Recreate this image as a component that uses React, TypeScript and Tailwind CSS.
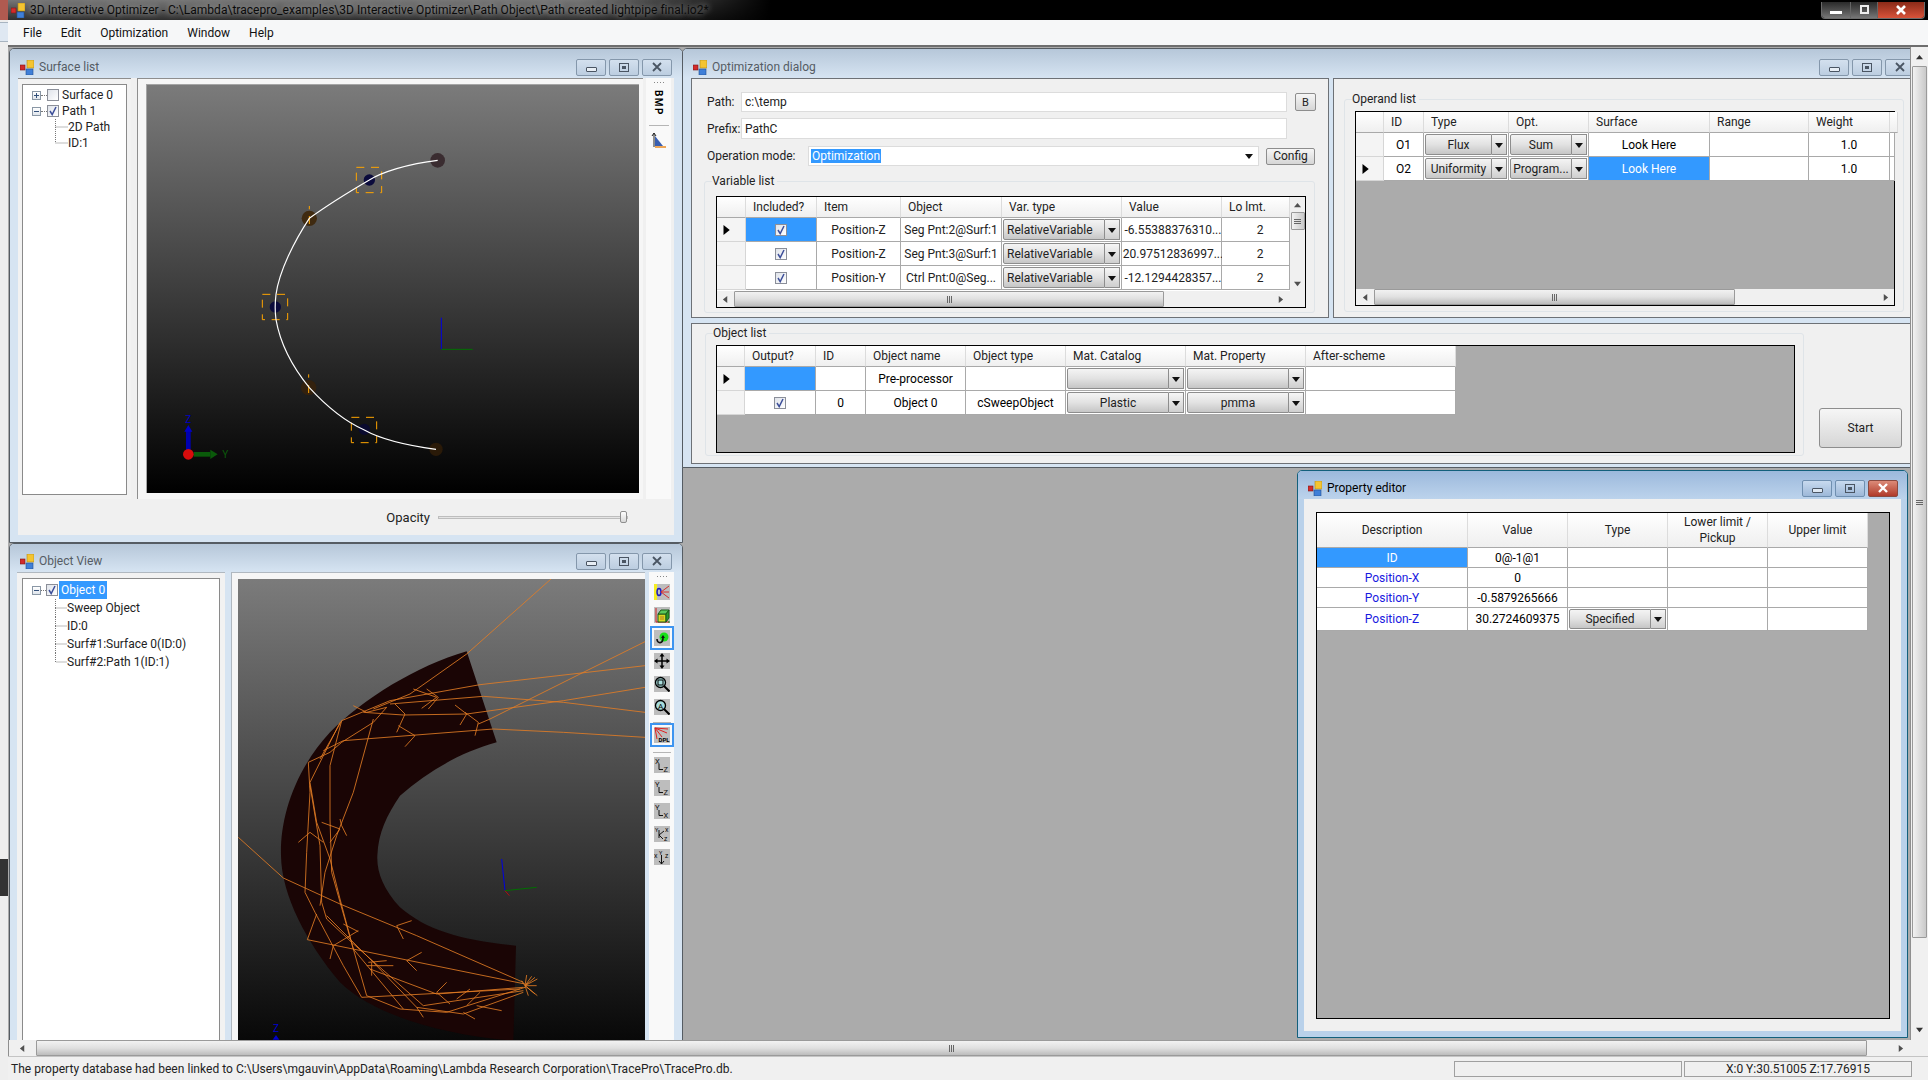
import React, { type FC, type ReactNode } from 'react';

const BLUE = 'bg-[#3399ff] text-white';

const AppIcon: FC = () => (
  <svg width="14" height="15" viewBox="0 0 14 15" className="shrink-0">
    <rect x="7" y="0" width="7" height="8" fill="#f4c430" stroke="#b08a18" strokeWidth="0.6" />
    <rect x="0" y="5" width="5" height="5" fill="#d22b2b" stroke="#7a1414" strokeWidth="0.6" />
    <rect x="6" y="9" width="7" height="6" fill="#3f7fd8" stroke="#234f90" strokeWidth="0.6" />
  </svg>
);

const Tri: FC<{ dir: 'up' | 'down' | 'left' | 'right'; size?: number; color?: string }> = ({
  dir,
  size = 7,
  color = '#505050',
}) => {
  const pts = {
    up: '0,6 8,6 4,1',
    down: '0,2 8,2 4,7',
    left: '6,0 6,8 1,4',
    right: '2,0 2,8 7,4',
  }[dir];
  return (
    <svg width={size} height={size} viewBox="0 0 8 8" className="shrink-0">
      <polygon points={pts} fill={color} />
    </svg>
  );
};

// little minimize / restore / close buttons of the child windows
const WinButtons: FC<{ active?: boolean }> = ({ active }) => {
  const face = active
    ? 'bg-gradient-to-b from-[#c8daef] to-[#9db8d8] border-[#6f8fb0]'
    : 'bg-gradient-to-b from-[#d3e0ee] to-[#bccde0] border-[#8497ab]';
  return (
    <div className="flex gap-[3px] shrink-0">
      <div className={`w-[30px] h-[17px] border rounded-[2px] flex items-end justify-center pb-[3px] ${face}`}>
        <div className="w-[11px] h-[5px] border border-[#4a5563] bg-white/60 rounded-[1px]" />
      </div>
      <div className={`w-[30px] h-[17px] border rounded-[2px] flex items-center justify-center ${face}`}>
        <div className="w-[10px] h-[9px] border border-[#4a5563] flex items-center justify-center">
          <div className="w-[4px] h-[3px] bg-[#4a5563]" />
        </div>
      </div>
      <div
        className={`w-[30px] h-[17px] border rounded-[2px] flex items-center justify-center ${
          active ? 'bg-gradient-to-b from-[#dc8a78] to-[#b0392a] border-[#8a4a40]' : face
        }`}
      >
        <svg width="12" height="10" viewBox="0 0 12 10">
          <path
            d="M2 1 L10 9 M10 1 L2 9"
            stroke={active ? '#ffffff' : '#4a5563'}
            strokeWidth={active ? 2.4 : 1.8}
            fill="none"
          />
        </svg>
      </div>
    </div>
  );
};

const ChildWindow: FC<{
  title: string;
  className: string;
  titleClass?: string;
  active?: boolean;
  children: ReactNode;
}> = ({ title, className, titleClass = 'h-[29px] pt-[7px]', active, children }) => (
  <div
    className={`absolute flex flex-col rounded-t-[5px] border ${
      active ? 'border-[#13607c] bg-[#b9d1ea]' : 'border-[#555c63] bg-[#d6e4f2]'
    } ${className}`}
  >
    <div
      className={`flex items-center shrink-0 pl-[10px] pr-[10px] rounded-t-[4px] bg-gradient-to-b ${
        active ? 'from-[#9cb9dc] to-[#bcd3ec]' : 'from-[#b6c7d9] to-[#d6e4f2]'
      } ${titleClass}`}
    >
      <AppIcon />
      <span className={`ml-[5px] ${active ? 'text-black' : 'text-[#555c64]'}`}>{title}</span>
      <div className="ml-auto">
        <WinButtons active={active} />
      </div>
    </div>
    {children}
  </div>
);

const Check: FC<{ on?: boolean; size?: string }> = ({ on = true, size = 'w-[12px] h-[12px]' }) => (
  <div
    className={`${size} border border-[#8b8f99] bg-gradient-to-br from-[#dfe3ea] to-white flex items-center justify-center shrink-0`}
  >
    {on && (
      <svg width="10" height="10" viewBox="0 0 10 10">
        <path d="M2 5 L4.2 8.6 L8 1" stroke="#3d4f9a" strokeWidth="1.5" fill="none" />
      </svg>
    )}
  </div>
);

const Expander: FC<{ minus?: boolean }> = ({ minus }) => (
  <div className="w-[9px] h-[9px] border border-[#8a97a5] bg-gradient-to-b from-white to-[#dfe5ec] relative shrink-0">
    <div className="absolute left-[1px] top-[3px] w-[5px] h-px bg-[#33507a]" />
    {!minus && <div className="absolute left-[3px] top-[1px] h-[5px] w-px bg-[#33507a]" />}
  </div>
);

const Conn: FC<{ h: number; last?: boolean; w?: number }> = ({ h, last, w = 11 }) => (
  <svg width={w} height={h} className="shrink-0">
    <path
      d={`M0.5 0 V${h / 2} H${w} ${last ? '' : `M0.5 ${h / 2} V${h}`}`}
      stroke="#777"
      strokeDasharray="1 1"
      fill="none"
    />
  </svg>
);

/* ---------- grid bits ---------- */

const Th: FC<{ children?: ReactNode; center?: boolean }> = ({ children, center }) => (
  <div
    className={`flex items-center border-r border-b border-r-[#dcdcdc] border-b-[#a9a9a9] bg-gradient-to-b from-white to-[#efefef] text-[#222] ${
      center ? 'justify-center text-center leading-[16px]' : 'pl-[7px]'
    }`}
  >
    {children}
  </div>
);

const Rh: FC<{ current?: boolean }> = ({ current }) => (
  <div className="flex items-center pl-[4px] border-r border-b border-[#d6d6d6] bg-[#f4f4f4]">
    {current && <Tri dir="right" size={10} color="#000" />}
  </div>
);

const Td: FC<{ children?: ReactNode; className?: string }> = ({ children, className = 'bg-white' }) => (
  <div className={`flex items-center justify-center border-r border-b border-[#a9a9a9] whitespace-nowrap ${className}`}>
    {children}
  </div>
);

const Combo: FC<{ text?: string; left?: boolean }> = ({ text, left }) => (
  <div className="flex border-r border-b border-[#a9a9a9] bg-white p-px">
    <div
      className={`flex-1 min-w-0 flex items-center border border-[#8d8d8d] rounded-l-[2px] bg-gradient-to-b from-[#f4f4f4] via-[#e2e2e2] to-[#c6c6c6] text-[#222] whitespace-nowrap overflow-hidden ${
        left ? 'pl-[3px]' : 'justify-center'
      }`}
    >
      {text}
    </div>
    <div className="w-[15px] flex items-center justify-center border border-l-0 border-[#8d8d8d] bg-gradient-to-b from-[#f6f6f6] to-[#cfcfcf]">
      <Tri dir="down" size={8} color="#111" />
    </div>
  </div>
);

const Grip: FC = () => (
  <div className="flex gap-px">
    <div className="w-px h-[7px] bg-[#666]" />
    <div className="w-px h-[7px] bg-[#666]" />
    <div className="w-px h-[7px] bg-[#666]" />
  </div>
);

const HScroll: FC<{ leftPad: string; thumb: string; rightPad: string; className?: string }> = ({
  leftPad,
  thumb,
  rightPad,
  className = 'h-[16px]',
}) => (
  <div className={`flex items-center bg-[#f0f0f0] shrink-0 ${className}`}>
    <div className={`flex justify-center shrink-0 ${leftPad}`}>
      <Tri dir="left" />
    </div>
    <div
      className={`h-full flex items-center justify-center border border-[#9a9a9a] rounded-[1px] bg-gradient-to-b from-[#f2f2f2] via-[#e0e0e0] to-[#bcbcbc] ${thumb}`}
    >
      <Grip />
    </div>
    <div className={`ml-auto ${rightPad}`}>
      <Tri dir="right" />
    </div>
  </div>
);

const VariableGrid: FC = () => {
  const rows = [
    ['Position-Z', 'Seg Pnt:2@Surf:1', '-6.55388376310...'],
    ['Position-Z', 'Seg Pnt:3@Surf:1', '20.97512836997...'],
    ['Position-Y', 'Ctrl Pnt:0@Seg...', '-12.1294428357...'],
  ];
  return (
    <div className="w-[590px] h-[112px] border border-black bg-white flex flex-col">
      <div className="flex h-[94px]">
        <div className="grid grid-cols-[29px_71px_84px_101px_120px_100px_68px] grid-rows-[21px_24px_24px_24px]">
          <Th />
          <Th>Included?</Th>
          <Th>Item</Th>
          <Th>Object</Th>
          <Th>Var. type</Th>
          <Th>Value</Th>
          <Th>Lo lmt.</Th>
          {rows.map((r, i) => (
            <React.Fragment key={i}>
              <Rh current={i === 0} />
              <Td className={i === 0 ? 'bg-[#3399ff]' : 'bg-white'}>
                <Check />
              </Td>
              <Td>{r[0]}</Td>
              <Td>{r[1]}</Td>
              <Combo text="RelativeVariable" left />
              <Td className="bg-white pl-[3px]">{r[2]}</Td>
              <Td className="bg-white pl-[9px]">2</Td>
            </React.Fragment>
          ))}
        </div>
        <div className="w-[16px] bg-[#f0f0f0] flex flex-col items-center pt-[5px]">
          <Tri dir="up" />
          <div className="mt-[3px] w-[14px] h-[18px] border border-[#9a9a9a] rounded-[1px] bg-gradient-to-r from-[#f2f2f2] to-[#c9c9c9] flex flex-col gap-px items-center justify-center">
            <div className="w-[7px] h-px bg-[#666]" />
            <div className="w-[7px] h-px bg-[#666]" />
            <div className="w-[7px] h-px bg-[#666]" />
          </div>
          <div className="mt-auto pb-[4px]">
            <Tri dir="down" />
          </div>
        </div>
      </div>
      <HScroll leftPad="w-[17px]" thumb="w-[430px]" rightPad="mr-[21px]" />
    </div>
  );
};

const OperandGrid: FC = () => (
  <div className="w-[540px] h-[195px] border border-black bg-[#ababab] flex flex-col">
    <div className="flex-1">
      <div className="grid w-max grid-cols-[28px_40px_85px_80px_121px_99px_81px_5px] grid-rows-[21px_24px_24px]">
        <Th />
        <Th>ID</Th>
        <Th>Type</Th>
        <Th>Opt.</Th>
        <Th>Surface</Th>
        <Th>Range</Th>
        <Th>Weight</Th>
        <Th />
        <Rh />
        <Td>O1</Td>
        <Combo text="Flux" />
        <Combo text="Sum" />
        <Td>Look Here</Td>
        <Td />
        <Td>1.0</Td>
        <Td />
        <Rh current />
        <Td>O2</Td>
        <Combo text="Uniformity" />
        <Combo text="Program..." />
        <Td className={BLUE}>Look Here</Td>
        <Td />
        <Td>1.0</Td>
        <Td />
      </div>
    </div>
    <HScroll leftPad="w-[18px]" thumb="w-[361px]" rightPad="mr-[5px]" />
  </div>
);

const ObjectGrid: FC = () => (
  <div className="w-[1079px] h-[108px] border border-black bg-[#ababab]">
    <div className="grid w-max grid-cols-[28px_71px_50px_100px_100px_120px_120px_150px] grid-rows-[21px_24px_24px]">
      <Th />
      <Th>Output?</Th>
      <Th>ID</Th>
      <Th>Object name</Th>
      <Th>Object type</Th>
      <Th>Mat. Catalog</Th>
      <Th>Mat. Property</Th>
      <Th>After-scheme</Th>
      <Rh current />
      <Td className={BLUE} />
      <Td />
      <Td>Pre-processor</Td>
      <Td />
      <Combo />
      <Combo />
      <Td />
      <Rh />
      <Td>
        <Check />
      </Td>
      <Td>0</Td>
      <Td>Object 0</Td>
      <Td>cSweepObject</Td>
      <Combo text="Plastic" />
      <Combo text="pmma" />
      <Td />
    </div>
  </div>
);

const PropertyGrid: FC = () => {
  const link = 'bg-white text-[#1a1ae0]';
  return (
    <div className="w-[574px] h-[507px] border border-black bg-[#ababab]">
      <div className="grid w-max grid-cols-[151px_100px_100px_100px_100px] grid-rows-[35px_20px_20px_20px_23px]">
        <Th center>Description</Th>
        <Th center>Value</Th>
        <Th center>Type</Th>
        <Th center>
          Lower limit /
          <br />
          Pickup
        </Th>
        <Th center>Upper limit</Th>
        <Td className={BLUE}>ID</Td>
        <Td>0@-1@1</Td>
        <Td />
        <Td />
        <Td />
        <Td className={link}>Position-X</Td>
        <Td>0</Td>
        <Td />
        <Td />
        <Td />
        <Td className={link}>Position-Y</Td>
        <Td>-0.5879265666</Td>
        <Td />
        <Td />
        <Td />
        <Td className={link}>Position-Z</Td>
        <Td>30.2724609375</Td>
        <Combo text="Specified" />
        <Td />
        <Td />
      </div>
    </div>
  );
};

const Group: FC<{ title: string; className: string; children: ReactNode }> = ({ title, className, children }) => (
  <div className={`relative border border-[#dfe4e8] rounded-[3px] ${className}`}>
    <span className="absolute -top-[8px] left-[7px] bg-[#f0f0f0] pr-[3px] leading-[14px] text-[#222]">{title}</span>
    {children}
  </div>
);

/* ---------- 3d views ---------- */

const PathView: FC = () => (
  <svg width="492" height="408" viewBox="18 -138 1476 1224" className="block">
    <defs>
      <linearGradient id="sky1" x1="0" y1="0" x2="0" y2="1">
        <stop offset="0" stopColor="#7b7b7b" />
        <stop offset="1" stopColor="#000000" />
      </linearGradient>
    </defs>
    <rect x="18" y="-138" width="1476" height="1224" fill="url(#sky1)" />
    <circle cx="890" cy="88" r="22" fill="#3a2c30" />
    <circle cx="505" cy="262" r="23" fill="#3f2a10" />
    <circle cx="685" cy="147" r="17" fill="#0b0b3c" />
    <circle cx="403" cy="528" r="17" fill="#0b0b3c" />
    <circle cx="503" cy="770" r="23" fill="#33210e" />
    <circle cx="670" cy="895" r="17" fill="#0a0a2e" />
    <circle cx="885" cy="955" r="20" fill="#2a1a08" />
    <g fill="none" stroke="#ffa500" strokeWidth="3" strokeDasharray="24 20">
      <rect x="646" y="109" width="76" height="76" />
      <rect x="364" y="490" width="76" height="76" />
      <rect x="631" y="859" width="76" height="76" />
      <path d="M505 225 V235 M505 255 V282 M503 730 V740 M503 762 V786" />
    </g>
    <path
      d="M890 88 C800 98 720 125 685 147 C620 185 560 222 505 262 C460 330 415 420 405 490 C400 530 403 550 405 566 C420 650 460 715 505 770 C560 830 620 875 670 897 C720 925 810 945 885 955"
      fill="none"
      stroke="#ffffff"
      strokeWidth="3.5"
    />
    <path d="M901 560 V655" stroke="#0000e0" strokeWidth="3" />
    <path d="M901 655 H995" stroke="#007000" strokeWidth="3" />
    <rect x="135" y="900" width="14" height="60" fill="#0000b0" />
    <polygon points="142,882 154,902 130,902" fill="#0000c8" />
    <rect x="158" y="963" width="50" height="14" fill="#0a5a0a" />
    <polygon points="230,970 208,956 208,984" fill="#0a5a0a" />
    <circle cx="142" cy="970" r="16" fill="#d80c0c" />
    <text x="142" y="875" fontSize="30" fill="#0000c8" textAnchor="middle">
      Z
    </text>
    <text x="253" y="980" fontSize="30" fill="#0a5a0a" textAnchor="middle">
      Y
    </text>
  </svg>
);

const RAYS = [
  '963,-120 710,105 540,225 430,270',
  '1245,68 1050,165 780,300 745,315',
  '1245,140 750,197 480,245 335,305 270,420',
  '1245,205 1000,245 710,285 520,288 400,280',
  '1245,280 1000,250 760,232 480,255',
  '1245,355 1000,340 790,330 340,365 280,395',
  '25,655 160,777 330,855 560,950 880,1090',
  '430,300 370,520 320,650 285,760 270,860',
  '335,305 300,440 300,600 305,760 350,920 370,990 410,1130',
  '330,310 240,490 260,610 300,720 330,840 370,990 520,1170',
  '235,430 240,520 230,700 225,820 255,880 340,1040 395,1135 870,1110',
  '240,500 270,680 275,850 290,900 365,970 580,1160 880,1115',
  '232,962 260,885',
  '232,962 540,1025 885,1095',
  '410,1130 510,1170 650,1180 885,1105',
  '420,1050 620,1125 880,1105',
  '290,890 430,1030 560,1165 700,1185 880,1120',
  '370,260 410,280 470,265 430,310 335,370 300,400 235,430',
  '550,210 620,235 575,268',
  '590,210 625,235 595,270',
  '675,258 710,285 690,318',
  '705,280 745,310 735,350',
  '505,320 555,350 525,383',
  '495,255 525,285 500,340',
  '205,670 240,640 280,670',
  '330,600 335,620 350,650',
  '275,610 330,630 300,670',
  '500,920 545,905',
  '500,920 520,960',
  '300,1020 310,980 385,935',
  '340,915 385,938',
  '530,1025 575,1000',
  '530,1025 560,1055',
  '410,1040 490,1040',
  '415,1030 470,1025',
  '425,1070 425,1030',
  '620,1120 650,1090',
  '620,1120 660,1155',
  '680,1140 720,1110',
  '710,1160 750,1120',
  '740,1160 815,1175',
  '700,1180 735,1200',
  '560,1165 580,1195',
  '885,1100 915,1075',
  '885,1100 922,1080',
  '885,1100 890,1068',
  '885,1100 905,1072',
  '885,1100 920,1100',
  '885,1100 915,1125',
  '885,1100 895,1130',
  '885,1100 922,1130',
  '885,1100 875,1085',
];

const SweepView: FC = () => (
  <svg width="407" height="463" viewBox="24 -120 1221 1389" className="block">
    <defs>
      <linearGradient id="sky2" x1="0" y1="0" x2="0" y2="1">
        <stop offset="0" stopColor="#7b7b7b" />
        <stop offset="1" stopColor="#080808" />
      </linearGradient>
    </defs>
    <rect x="24" y="-120" width="1221" height="1389" fill="url(#sky2)" />
    <path
      d="M710 97 C560 140 400 240 300 340 C190 460 150 600 153 710 C155 830 230 970 330 1090 C430 1190 650 1250 850 1265 L858 980 C700 965 590 935 510 865 C460 810 440 760 442 710 C445 640 470 590 510 530 C590 460 690 400 800 370 Z"
      fill="#1a0505"
    />
    {RAYS.map((r) => (
      <polyline key={r} points={r} fill="none" stroke="#e47d24" strokeWidth="2.5" />
    ))}
    <path d="M815 720 L825 815" stroke="#0000e0" strokeWidth="3" />
    <path d="M825 815 L920 805" stroke="#007000" strokeWidth="3" />
    <path d="M825 815 L838 830" stroke="#b01010" strokeWidth="3" />
    <text x="138" y="1240" fontSize="30" fill="#0000d0" textAnchor="middle">
      Z
    </text>
    <polygon points="138,1248 148,1262 128,1262" fill="#0000c8" />
  </svg>
);

/* ---------- toolbar glyphs ---------- */

const Tile: FC<{ children: ReactNode; on?: boolean }> = ({ children, on }) => (
  <div
    className={`w-[16px] h-[16px] bg-[#bdbdbd] shrink-0 ${
      on ? 'outline-[2px] outline-[#3d94f0] outline-offset-[2px]' : ''
    }`}
  >
    <svg width="16" height="16" viewBox="0 0 16 16" className="block">
      {children}
    </svg>
  </div>
);

const AxisTile: FC<{ a: string; b: string }> = ({ a, b }) => (
  <Tile>
    <text x="1" y="7" fontSize="7.5" fill="#111">
      {a}
    </text>
    <path d="M5 7 V12.5 H9" stroke="#111" fill="none" />
    <text x="9.5" y="15" fontSize="7.5" fill="#111">
      {b}
    </text>
  </Tile>
);

const Divider: FC<{ className: string }> = ({ className }) => (
  <div className={`w-[18px] h-px bg-[#b5b5b5] ${className}`} />
);

const Dots: FC = () => (
  <div className="flex gap-[2px]">
    <div className="w-px h-px bg-[#888]" />
    <div className="w-px h-px bg-[#888]" />
    <div className="w-px h-px bg-[#888]" />
    <div className="w-px h-px bg-[#888]" />
  </div>
);

const ViewToolbar: FC = () => (
  <div className="w-[25px] ml-[4px] flex flex-col items-center pt-[4px] gap-[7px] bg-[#f9f9f9]">
    <Dots />
    <Tile>
      <rect width="3" height="16" fill="#f5ee20" />
      <ellipse cx="5" cy="8" rx="2" ry="3.5" fill="none" stroke="#1b1bc0" strokeWidth="1.5" />
      <path d="M7 8 L15 2 M7 8 L15 8 M7 8 L15 14" stroke="#d43030" />
    </Tile>
    <Tile>
      <path d="M2 1 V15 H15" stroke="#d02020" fill="none" />
      <path d="M14 15 H16" stroke="#1a8a1a" />
      <polygon points="4,7 12,7 12,15 4,15" fill="#d8d820" stroke="#1a5a1a" />
      <polygon points="4,7 7,3 15,3 12,7" fill="#5ac85a" stroke="#1a5a1a" />
      <polygon points="12,7 15,3 15,11 12,15" fill="#2a9a2a" stroke="#1a5a1a" />
      <rect x="6" y="9" width="4" height="4" fill="#c8a820" />
    </Tile>
    <Tile on>
      <circle cx="10" cy="7" r="4.5" fill="#18e018" />
      <path d="M3 9 C3 14 9 14 9 8" stroke="#111" strokeWidth="1.6" fill="none" />
      <polygon points="7,8 11,8 9,5" fill="#111" />
    </Tile>
    <Tile>
      <path d="M8 2 V14 M2 8 H14" stroke="#000" strokeWidth="1.5" />
      <polygon points="8,0 5.5,3.5 10.5,3.5" fill="#000" />
      <polygon points="8,16 5.5,12.5 10.5,12.5" fill="#000" />
      <polygon points="0,8 3.5,5.5 3.5,10.5" fill="#000" />
      <polygon points="16,8 12.5,5.5 12.5,10.5" fill="#000" />
    </Tile>
    <Tile>
      <circle cx="6.5" cy="6.5" r="5" fill="#a8dcdc" stroke="#000" strokeWidth="1.3" />
      <rect x="4" y="4" width="5" height="5" fill="none" stroke="#000" />
      <path d="M10 10 L15.5 15.5" stroke="#000" strokeWidth="2" />
    </Tile>
    <Tile>
      <circle cx="6.5" cy="6.5" r="5" fill="#a8dcdc" stroke="#000" strokeWidth="1.3" />
      <text x="6.5" y="9.5" fontSize="8" textAnchor="middle" fill="#000">
        A
      </text>
      <path d="M10 10 L15.5 15.5" stroke="#000" strokeWidth="2" />
    </Tile>
    <Divider className="-mb-[3px]" />
    <Tile on>
      <path d="M1 1 L8 10 M1 1 L13 6 M1 1 L3 12 M1 1 L14 2" stroke="#e02020" />
      <text x="15.5" y="15" fontSize="6" textAnchor="end" fontWeight="700" fill="#000">
        DPL
      </text>
    </Tile>
    <Divider className="mt-[2px] -mb-[3px]" />
    <AxisTile a="X" b="Z" />
    <AxisTile a="Y" b="Z" />
    <AxisTile a="Y" b="X" />
    <Tile>
      <text x="1" y="6" fontSize="5.5">
        Y
      </text>
      <text x="11" y="6" fontSize="5.5">
        X
      </text>
      <text x="10" y="15" fontSize="5.5">
        Z
      </text>
      <path d="M5 4 V12 M5 9 L10 5 M5 9 L9 13" stroke="#111" fill="none" />
    </Tile>
    <Tile>
      <text x="0" y="9" fontSize="5.5">
        X
      </text>
      <text x="5" y="5.5" fontSize="5.5">
        Y
      </text>
      <text x="11" y="9" fontSize="5.5">
        Z
      </text>
      <path d="M7.5 6 V15 M5 12 L7.5 15 L10 12" stroke="#111" fill="none" />
    </Tile>
  </div>
);

const TitleButtons: FC = () => (
  <div className="ml-auto mr-[3px] flex h-[17px] border border-t-0 border-[#6a6a6a] rounded-b-[4px] overflow-hidden shrink-0">
    <div className="w-[28px] flex items-end justify-center pb-[4px] bg-gradient-to-b from-[#2a2a2a] to-[#777]">
      <div className="w-[12px] h-[3px] bg-white" />
    </div>
    <div className="w-[27px] flex items-center justify-center border-l border-[#666] bg-gradient-to-b from-[#2a2a2a] to-[#777]">
      <div className="w-[9px] h-[9px] border-2 border-[#eee]" />
    </div>
    <div className="w-[47px] flex items-center justify-center border-l border-[#666] bg-gradient-to-b from-[#8a2a18] to-[#d8533a]">
      <svg width="12" height="10" viewBox="0 0 12 10">
        <path d="M2 1 L10 9 M10 1 L2 9" stroke="#fff" strokeWidth="2.6" />
      </svg>
    </div>
  </div>
);

const App: FC = () => (
  <div className="w-[1928px] h-[1080px] overflow-hidden flex flex-col bg-[#f0f0f0] text-[12px] leading-none text-black font-['Roboto',sans-serif]">
    {/* window caption */}
    <div className="h-[20px] shrink-0 flex items-center bg-[linear-gradient(to_right,transparent_30%,#000_40%),linear-gradient(to_bottom,#767676,#2e2e2e)]">
      <div className="w-[8px] h-full bg-[#b05a50]" />
      <div className="ml-[3px] mt-[1px]">
        <AppIcon />
      </div>
      <span className="ml-[5px] tracking-[0.03px] text-[#0a0a0a] [text-shadow:0_0_6px_rgba(255,255,255,0.7)]">
        3D Interactive Optimizer - C:\Lambda\tracepro_examples\3D Interactive Optimizer\Path Object\Path created
        lightpipe final.io2*
      </span>
      <TitleButtons />
    </div>

    <div className="flex flex-1 min-h-0">
      {/* sliver of the window behind */}
      <div className="w-[8px] shrink-0 flex flex-col bg-[#eeeeee]">
        <div className="h-[20px] mt-[2px] bg-[#dfe8f2] border-y border-[#a8b4c0]" />
        <div className="mt-[817px] h-[37px] bg-[#333333]" />
      </div>

      <div className="flex-1 min-w-0 flex flex-col">
        {/* menu */}
        <div className="h-[27px] shrink-0 flex items-center gap-[19px] pl-[15px] bg-[#f6f7f8] border-b-2 border-[#6e6e6e] text-[#111]">
          <span>File</span>
          <span>Edit</span>
          <span>Optimization</span>
          <span>Window</span>
          <span>Help</span>
        </div>

        <div className="flex h-[993px] shrink-0">
          {/* MDI client: free canvas of child windows */}
          <div className="relative w-[1902px] h-full overflow-hidden bg-[#ababab]">
            <ChildWindow title="Surface list" className="left-[1px] top-px w-[674px] h-[495px]">
              <div className="mx-[8px] h-[457px] flex flex-col bg-[#f0f0f0]">
                <div className="flex h-[421px]">
                  <div className="w-[113px] border-t border-[#8e8e8e] px-[4px] pt-[5px] pb-[4px] bg-[#f2f2f2]">
                    <div className="h-full border border-[#8a8a8a] bg-white pt-[2px] pl-[9px] text-[#222]">
                      <div className="flex items-center h-[16px]">
                        <Expander />
                        <div className="w-[6px] border-t border-dotted border-[#777]" />
                        <Check on={false} />
                        <span className="ml-[3px]">Surface 0</span>
                      </div>
                      <div className="flex items-center h-[16px]">
                        <Expander minus />
                        <div className="w-[6px] border-t border-dotted border-[#777]" />
                        <Check />
                        <span className="ml-[3px]">Path 1</span>
                      </div>
                      <div className="flex items-center h-[16px] pl-[23px]">
                        <Conn h={16} w={13} />
                        <span>2D Path</span>
                      </div>
                      <div className="flex items-center h-[16px] pl-[23px]">
                        <Conn h={16} w={13} last />
                        <span>ID:1</span>
                      </div>
                    </div>
                  </div>
                  <div className="w-[506px] ml-[6px] border-t border-l border-[#8e8e8e] bg-[#f6f6f6] pl-[8px] pt-[5px]">
                    <div className="border-t border-l border-[#a5a5a5] w-[493px]">
                      <PathView />
                    </div>
                  </div>
                  <div className="w-[25px] ml-[3px] flex flex-col items-center pt-[4px] bg-[#f9f9f9]">
                    <Dots />
                    <div className="mt-[8px] h-[24px] w-[12px] flex items-center justify-center">
                      <span className="rotate-90 font-bold text-[10px] tracking-[1.5px]">BMP</span>
                    </div>
                    <div className="mt-[10px] w-[20px] h-px bg-[#b5b5b5]" />
                    <svg width="16" height="16" viewBox="0 0 16 16" className="mt-[6px]">
                      <path d="M3 15 V1 M1 4 L3 1 L5 4" stroke="#222" fill="none" />
                      <polygon points="4,4 12,14 4,14" fill="#3a5fb0" />
                      <path d="M4 15 H15" stroke="#e88a20" strokeWidth="1.5" />
                    </svg>
                  </div>
                </div>
                <div className="flex-1 flex items-center justify-end pr-[46px]">
                  <span className="text-[#222] text-[13px]">Opacity</span>
                  <div className="ml-[8px] w-[190px] h-[3px] border border-[#bdbdbd] bg-[#e4e4e4] flex items-center justify-end">
                    <div className="w-[7px] h-[12px] border border-[#8f8f8f] rounded-[2px] bg-gradient-to-b from-white to-[#d8d8d8] shrink-0" />
                  </div>
                </div>
              </div>
            </ChildWindow>

            <ChildWindow
              title="Object View"
              className="left-[1px] top-[496px] w-[674px] h-[560px]"
              titleClass="h-[28px] pt-[6px]"
            >
              <div className="flex flex-1 mx-[7px] min-h-0">
                <div className="w-[208px] border-t border-[#b0b8c0] px-[5px] pt-[5px] bg-[#f2f2f2]">
                  <div className="h-full border border-[#8a8a8a] bg-white pt-[2px] pl-[9px] text-[#222]">
                    <div className="flex items-center h-[18px]">
                      <Expander minus />
                      <div className="w-[5px] border-t border-dotted border-[#777]" />
                      <Check />
                      <span className="ml-px h-[18px] px-[2px] flex items-center bg-[#3399ff] text-white">
                        Object 0
                      </span>
                    </div>
                    {['Sweep Object', 'ID:0', 'Surf#1:Surface 0(ID:0)', 'Surf#2:Path 1(ID:1)'].map((t, i) => (
                      <div key={t} className="flex items-center h-[18px] pl-[23px]">
                        <Conn h={18} w={12} last={i === 3} />
                        <span>{t}</span>
                      </div>
                    ))}
                  </div>
                </div>
                <div className="w-[414px] ml-[6px] border-t border-l border-[#b0b8c0] bg-[#f6f6f6] pl-[6px] pt-[6px]">
                  <SweepView />
                </div>
                <ViewToolbar />
              </div>
            </ChildWindow>

            <ChildWindow title="Optimization dialog" className="left-[674px] top-px w-[1244px] h-[420px]">
              <div className="pl-[8px] flex flex-col gap-[5px]">
                <div className="flex gap-[4px]">
                  {/* left group */}
                  <div className="w-[638px] h-[240px] shrink-0 border border-[#6d7176] bg-[#f0f0f0] pl-[15px] pt-[13px] text-[#222]">
                    <div className="flex items-center h-[20px]">
                      <span className="w-[34px]">Path:</span>
                      <div className="w-[546px] h-full border border-[#dcdcdc] bg-white flex items-center pl-[3px]">
                        c:\temp
                      </div>
                      <button className="ml-[8px] w-[21px] h-[18px] border border-[#8d8d8d] rounded-[2px] bg-gradient-to-b from-[#f6f6f6] to-[#d6d6d6] text-[11px]">
                        B
                      </button>
                    </div>
                    <div className="flex items-center h-[21px] mt-[6px]">
                      <span className="w-[34px]">Prefix:</span>
                      <div className="w-[546px] h-full border border-[#dcdcdc] bg-white flex items-center pl-[3px]">
                        PathC
                      </div>
                    </div>
                    <div className="flex items-center h-[20px] mt-[7px]">
                      <span className="w-[101px]">Operation mode:</span>
                      <div className="w-[451px] h-full border border-[#dcdcdc] bg-white flex items-center pl-[2px]">
                        <span className="h-[14px] px-px flex items-center bg-[#3399ff] text-white">Optimization</span>
                        <div className="ml-auto mr-[5px]">
                          <Tri dir="down" size={8} color="#111" />
                        </div>
                      </div>
                      <button className="ml-[7px] w-[49px] h-[17px] border border-[#8d8d8d] rounded-[2px] bg-gradient-to-b from-[#f6f6f6] to-[#d6d6d6]">
                        Config
                      </button>
                    </div>
                    <Group title="Variable list" className="ml-[-3px] mt-[15px] w-[611px] h-[132px] pl-[11px] pt-[14px]">
                      <VariableGrid />
                    </Group>
                  </div>
                  {/* right group */}
                  <div className="flex-1 h-[240px] border border-[#6d7176] bg-[#f0f0f0] pl-[10px] pt-[20px]">
                    <Group title="Operand list" className="w-[560px] h-[213px] pl-[10px] pt-[11px]">
                      <OperandGrid />
                    </Group>
                  </div>
                </div>
                <div className="h-[141px] mr-[6px] border border-[#6d7176] bg-[#f0f0f0] pl-[13px] pt-[9px] flex">
                  <Group title="Object list" className="w-[1099px] h-[123px] pl-[10px] pt-[11px] shrink-0">
                    <ObjectGrid />
                  </Group>
                  <button className="ml-[15px] mt-[75px] w-[83px] h-[40px] border border-[#8d8d8d] rounded-[3px] bg-gradient-to-b from-[#f6f6f6] to-[#d6d6d6] text-[#222] shrink-0">
                    Start
                  </button>
                </div>
              </div>
            </ChildWindow>

            <ChildWindow
              title="Property editor"
              className="left-[1289px] top-[423px] w-[611px] h-[568px]"
              titleClass="h-[28px] pt-[6px] !pr-[9px]"
              active
            >
              <div className="mx-[6px] h-[532px] bg-[#f0f0f0] pl-[12px] pt-[13px]">
                <PropertyGrid />
              </div>
            </ChildWindow>
          </div>

          {/* MDI vertical scrollbar */}
          <div className="w-[18px] flex flex-col items-center bg-[#f0f0f0] pt-[7px] border-l border-[#8f8f8f]">
            <Tri dir="up" color="#333" />
            <div className="mt-[5px] w-[15px] h-[872px] border border-[#9a9a9a] rounded-[1px] bg-gradient-to-r from-[#f2f2f2] to-[#c9c9c9] flex flex-col gap-px items-center justify-center">
              <div className="w-[7px] h-px bg-[#666]" />
              <div className="w-[7px] h-px bg-[#666]" />
              <div className="w-[7px] h-px bg-[#666]" />
            </div>
            <div className="mt-auto pb-[7px]">
              <Tri dir="down" color="#333" />
            </div>
          </div>
        </div>

        {/* MDI horizontal scrollbar */}
        <div className="flex shrink-0">
          <div className="w-[1902px] border-l border-[#8f8f8f]">
            <HScroll leftPad="w-[27px]" thumb="w-[1831px]" rightPad="mr-[6px]" />
          </div>
        </div>

        {/* status bar */}
        <div className="flex-1 flex items-center pl-[3px] pr-[16px] gap-[2px] border-t border-[#c4c4c4] text-[#222]">
          <span className="flex-1 tracking-[0.04px]">
            The property database had been linked to C:\Users\mgauvin\AppData\Roaming\Lambda Research
            Corporation\TracePro\TracePro.db.
          </span>
          <div className="w-[228px] h-[16px] border border-[#a0a0a0]" />
          <div className="w-[228px] h-[16px] border border-[#a0a0a0] flex items-center justify-center">
            X:0 Y:30.51005 Z:17.76915
          </div>
        </div>
      </div>
    </div>
  </div>
);

export default App;
